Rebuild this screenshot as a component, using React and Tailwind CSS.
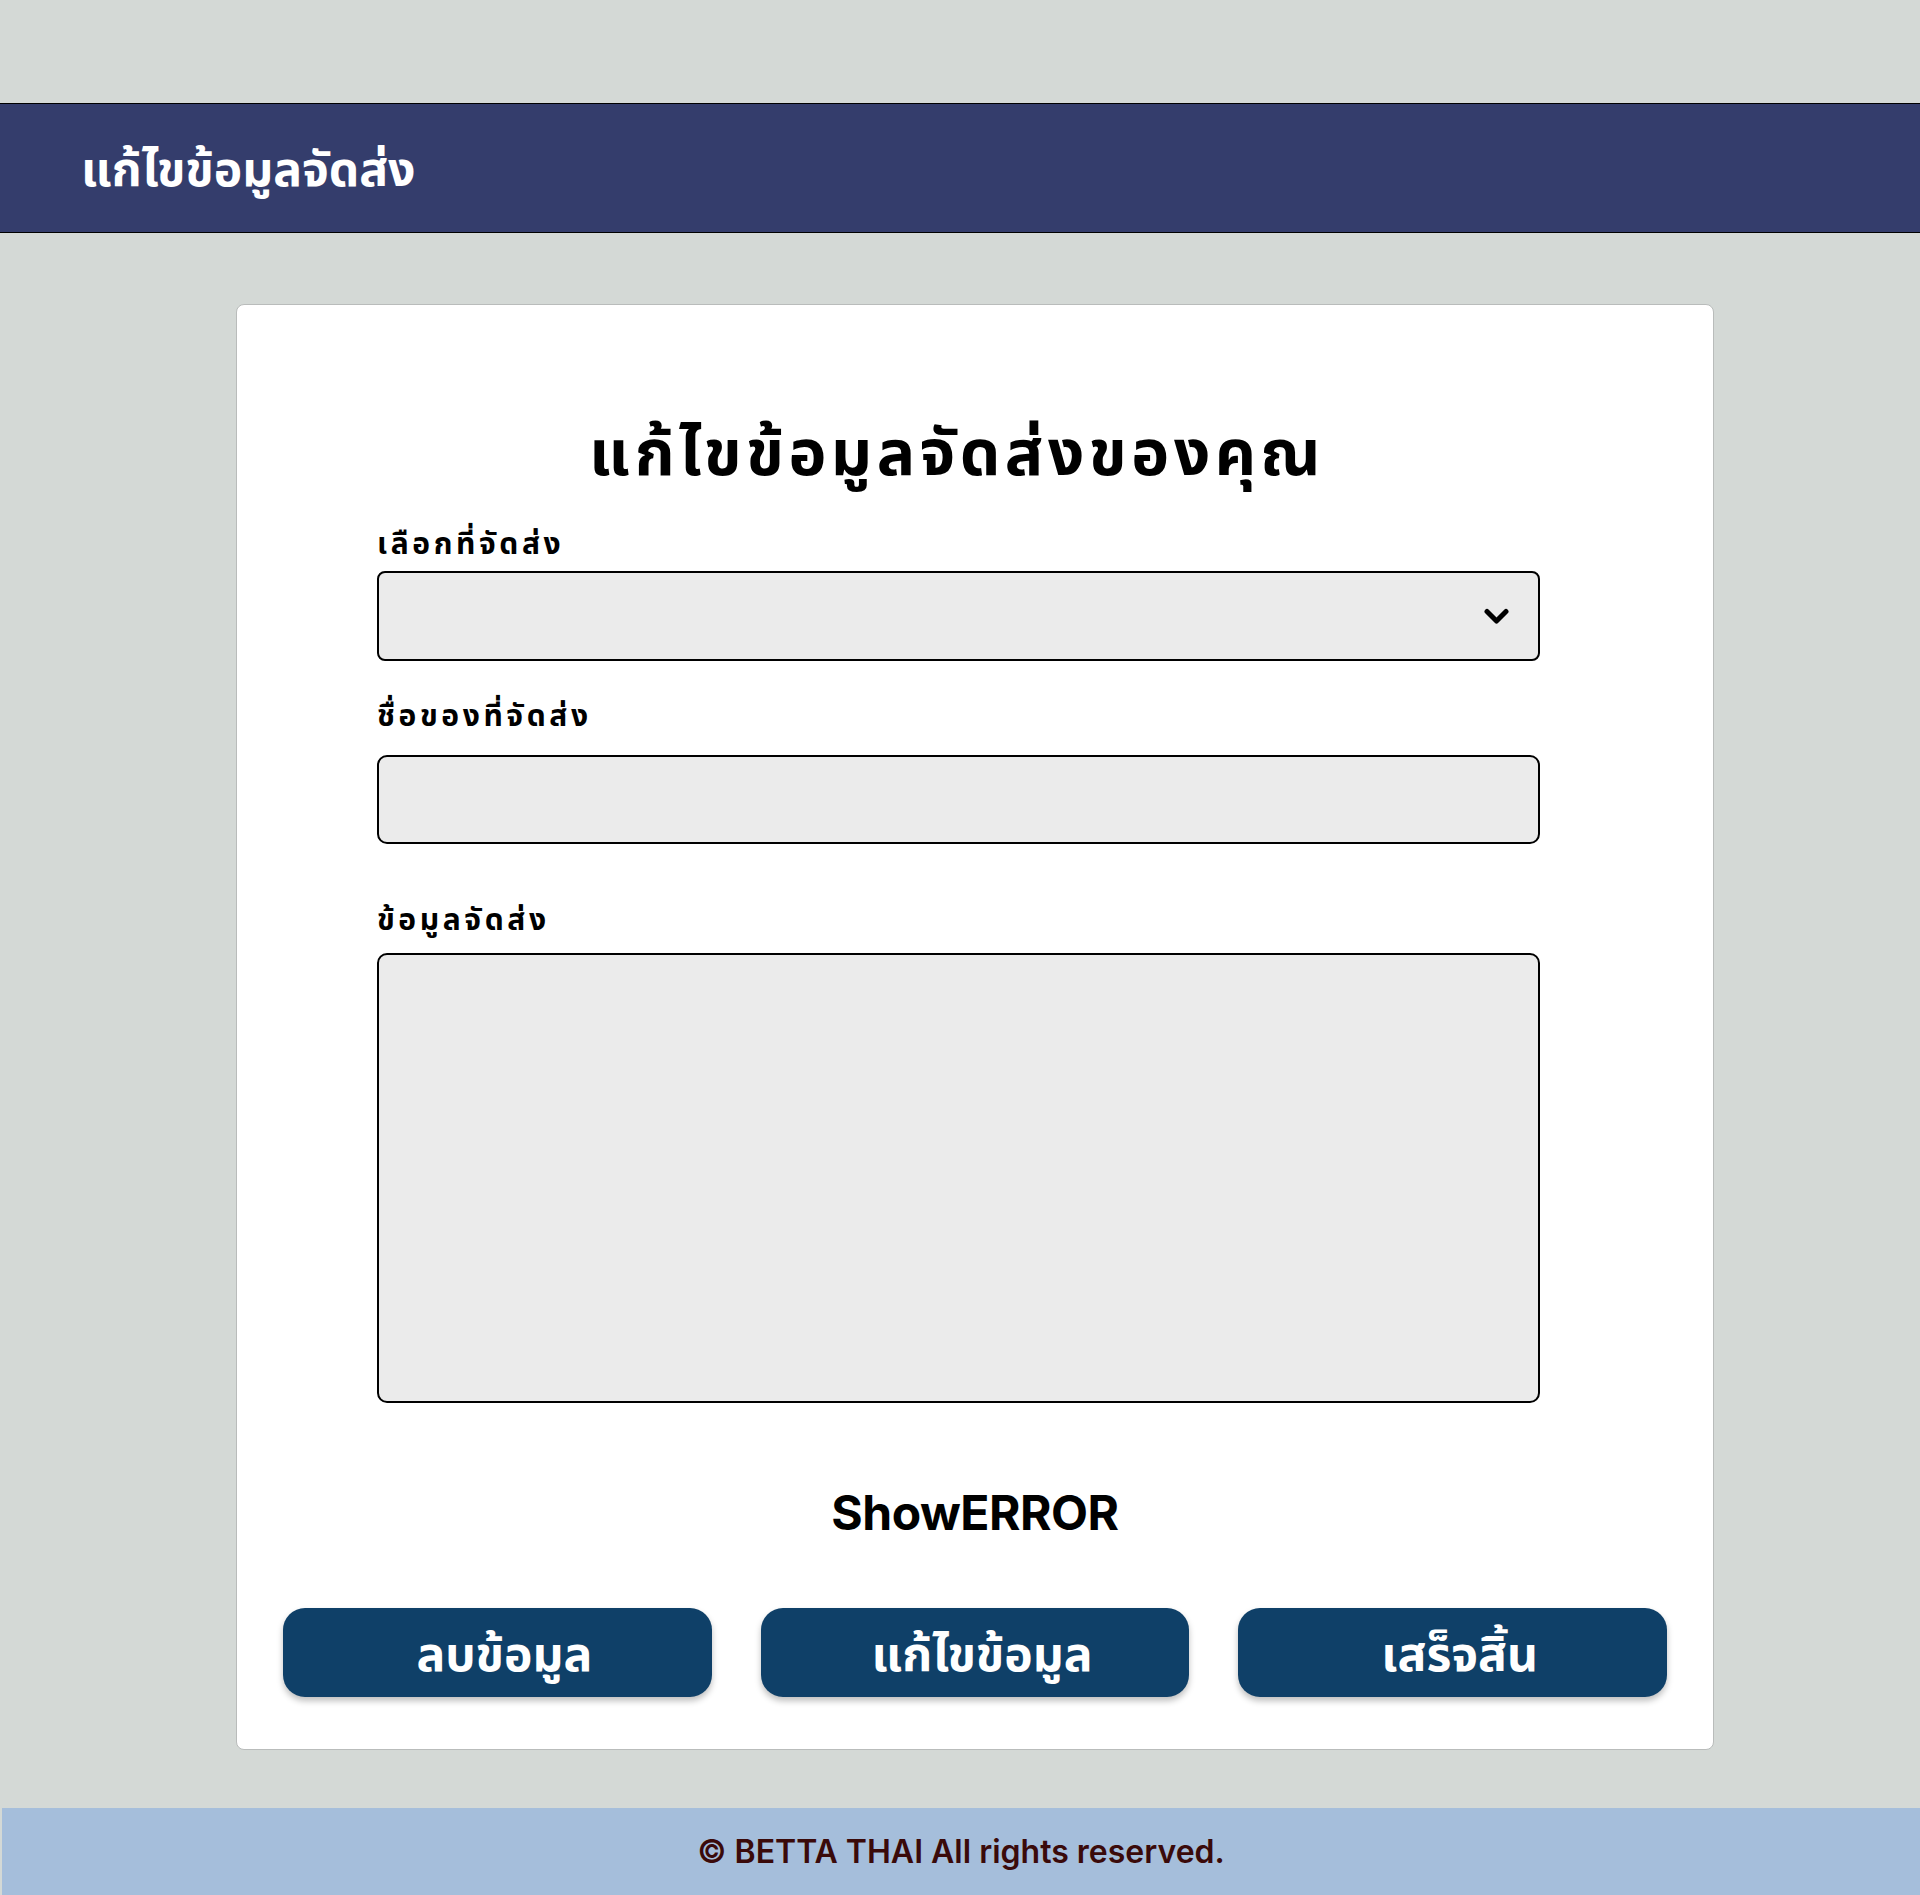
const thai = "font-['Noto_Sans','Noto_Sans_Thai',sans-serif]";

const Field = ({ label, className = "", children }) => (
  <div className={`flex flex-col ${className}`}>
    <label className={`${thai} text-[30px] font-bold tracking-[0.12em] text-black leading-[40px] mb-[8px]`}>
      {label}
    </label>
    {children}
  </div>
);

const ActionButton = ({ children }) => (
  <button className={`${thai} h-[89px] pl-[14px] rounded-[22px] bg-[#0f4068] text-white text-[48px] font-bold shadow-[0_4px_6px_rgba(0,0,0,0.25)]`}>
    {children}
  </button>
);

export default function App() {
  return (
    <div className="min-h-[1895px] bg-[#d4d9d6] flex flex-col">
      <div className="h-[103px]" />
      <header className="h-[130px] bg-[#343d6c] border-y border-black flex items-center pl-[81px]">
        <h1 className={`${thai} text-[48px] font-bold text-white`}>แก้ไขข้อมูลจัดส่ง</h1>
      </header>

      <main className="pt-[71px] pb-[58px] pl-[236px]">
        <div className="w-[1478px] h-[1446px] bg-white border border-[#b9bcbb] rounded-[8px] px-[46px] pt-[106px]">
          <h2 className={`${thai} mr-[36px] text-center text-[64px] font-bold tracking-[0.07em] text-black leading-[80px]`}>
            แก้ไขข้อมูลจัดส่งของคุณ
          </h2>

          <div className="w-[1163px] ml-[94px] mt-[32px]">
            <Field label="เลือกที่จัดส่ง">
              <div className="h-[90px] bg-[#ebebeb] border-2 border-black rounded-[8px] flex items-center justify-end pr-[29px]">
                <svg width="25" height="17" viewBox="0 0 25 17" fill="none">
                  <path d="M3 3.5l9.5 9.5 9.5-9.5" stroke="black" strokeWidth="5" strokeLinecap="round" strokeLinejoin="round" />
                </svg>
              </div>
            </Field>

            <Field label="ชื่อของที่จัดส่ง" className="mt-[34px]">
              <div className="h-[89px] bg-[#ebebeb] border-2 border-black rounded-[10px] mt-[12px]" />
            </Field>

            <Field label="ข้อมูลจัดส่ง" className="mt-[55px]">
              <div className="h-[450px] bg-[#ebebeb] border-2 border-black rounded-[10px] mt-[6px]" />
            </Field>
          </div>

          <p className="mt-[78px] text-center font-['Inter',sans-serif] text-[48px] font-bold text-black leading-[64px] tracking-[-0.01em]">
            ShowERROR
          </p>

          <div className="grid grid-cols-3 gap-[49px] mt-[63px]">
            <ActionButton>ลบข้อมูล</ActionButton>
            <ActionButton>แก้ไขข้อมูล</ActionButton>
            <ActionButton>เสร็จสิ้น</ActionButton>
          </div>
        </div>
      </main>

      <footer className="ml-[2px] h-[87px] bg-[#a5bedb] flex items-center justify-center">
        <p className="font-['Inter',sans-serif] text-[32px] font-semibold text-[#3a0a0a]">
          © BETTA THAI All rights reserved.
        </p>
      </footer>
    </div>
  );
}
